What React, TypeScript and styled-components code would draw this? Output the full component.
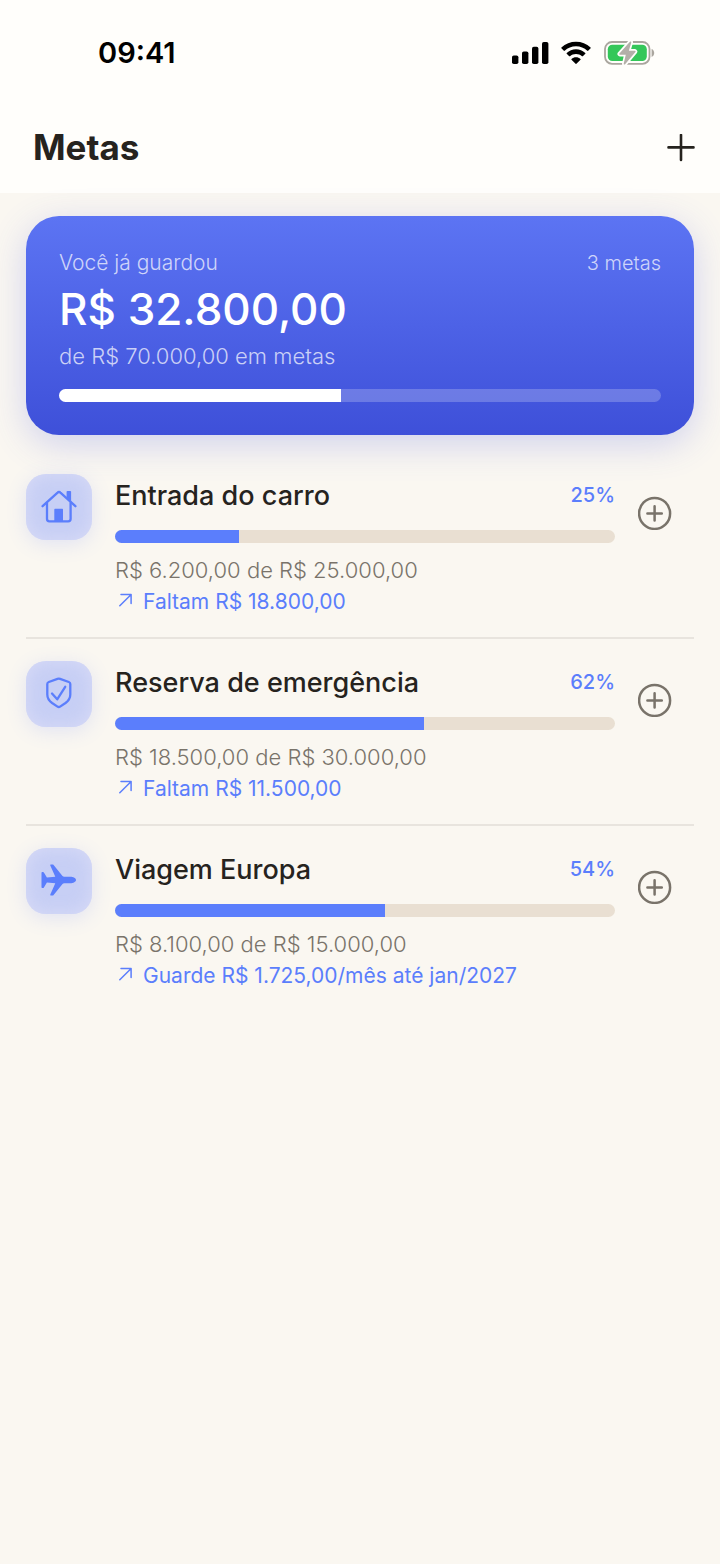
import React from "react";
import styled, { createGlobalStyle } from "styled-components";

const GlobalStyle = createGlobalStyle`
  * { box-sizing: border-box; }
  html { background: #faf7f1; }
  body {
    margin: 0;
    background: #faf7f1;
    color: #26231e;
    font-family: Inter, "Liberation Sans", sans-serif;
  }
`;

const Screen = styled.div`
  min-height: 100vh;
  overflow: hidden;
`;

const Header = styled.header`
  background: #fffefb;
  padding: 32px 25px 16px 33px;
`;

const StatusBar = styled.div`
  display: flex;
  align-items: center;
  justify-content: space-between;
  height: 42px;
  padding: 0 40px 0 65px;
`;

const Clock = styled.time`
  color: #000;
  font-size: 29px;
  font-weight: 600;
  line-height: 42px;
`;

const StatusIcons = styled.div`
  display: flex;
  align-items: center;
  gap: 11px;

  svg { display: block; }
`;

const TitleBar = styled.div`
  display: flex;
  align-items: center;
  justify-content: space-between;
  margin-top: 44px;
`;

const Title = styled.h1`
  margin: 0;
  font-size: 35px;
  font-weight: 700;
  line-height: 59px;
`;

const IconButton = styled.button`
  display: block;
  padding: 0;
  border: 0;
  background: none;
  color: inherit;
  cursor: pointer;

  svg { display: block; }
`;

const Main = styled.main`
  padding: 23px 26px;
`;

const Card = styled.section`
  padding: 33px;
  border-radius: 33px;
  background: linear-gradient(180deg, #5c74f3 0%, #3e50d9 100%);
  box-shadow: 0 9px 36px rgba(75, 92, 225, 0.24);
  color: #fff;
`;

const CardTop = styled.div`
  display: flex;
  justify-content: space-between;
`;

const Caption = styled.p<{ $size?: number }>`
  margin: 0;
  color: rgba(255, 255, 255, 0.72);
  font-size: ${(p) => p.$size ?? 21}px;
  font-weight: 300;
  line-height: 28px;
`;

const Amount = styled.p`
  margin: 0;
  font-size: 44px;
  font-weight: 500;
  line-height: 65px;
`;

const Bar = styled.div<{ $track: string }>`
  height: 13px;
  overflow: hidden;
  border-radius: 7px;
  background: ${(p) => p.$track};
`;

const CardBar = styled(Bar)`
  margin-top: 19px;
`;

const Fill = styled.div<{ $color: string }>`
  height: 100%;
  background: ${(p) => p.$color};
`;

const List = styled.ul`
  margin: 16px 0 0;
  padding: 0;
  list-style: none;
`;

const Item = styled.li`
  display: flex;
  align-items: flex-start;
  gap: 23px;
  padding: 23px 22px 20px 0;

  & + & { border-top: 2px solid #e8e4de; padding-top: 22px; }
`;

const Tile = styled.div`
  display: grid;
  flex: none;
  place-items: center;
  width: 66px;
  height: 66px;
  border-radius: 20px;
  background: #c7cff5;
  box-shadow: 0 4px 20px rgba(91, 126, 252, 0.16), inset 0 0 18px rgba(221, 223, 246, 0.8);
  color: #5b7efc;

  svg { display: block; }
`;

const Body = styled.div`
  flex: 1;
  min-width: 0;
`;

const ItemTop = styled.div`
  display: flex;
  justify-content: space-between;
`;

const Name = styled.h2`
  margin: 0;
  font-size: 27px;
  font-weight: 500;
  line-height: 44px;
`;

const Percent = styled.span`
  color: #5b7efc;
  font-size: 20px;
  font-weight: 500;
  line-height: 42px;
`;

const GoalBar = styled(Bar)`
  margin: 12px 0;
`;

const Saved = styled.p`
  margin: 0;
  color: #79736a;
  font-size: 22px;
  font-weight: 300;
  line-height: 31px;
`;

const Hint = styled.p`
  display: flex;
  align-items: center;
  gap: 9px;
  margin: 0;
  color: #5b7efc;
  font-size: 21px;
  font-weight: 400;
  line-height: 31px;
`;

const AddButton = styled(IconButton)`
  flex: none;
  margin-top: 22px;
  color: #79736a;
`;

const SignalIcon = () => (
  <svg width="37" height="24" viewBox="0 0 37 24" fill="#000" aria-hidden="true">
    <rect x="0" y="14.5" width="6.4" height="8.600" rx="1.8" />
    <rect x="10" y="10.5" width="6.4" height="12.600" rx="1.8" />
    <rect x="20" y="5.8" width="6.4" height="17.300" rx="1.8" />
    <rect x="30" y="1" width="6.4" height="22.100" rx="1.8" />
  </svg>
);

const WifiIcon = () => (
  <svg width="32" height="24" viewBox="0 0 32 24" fill="#000" aria-hidden="true">
    <path d="M16 5.3c4.3 0 8.300 1.700 11.300 4.500.25.2.6.2.8 0l2.500-2.500c.25-.25.25-.6 0-.8C26.600 2.700 21.500.7 16 .7S5.400 2.700 1.400 6.500c-.25.2-.25.55 0 .8l2.500 2.500c.2.2.55.2.8 0C7.700 7 11.700 5.300 16 5.300z" />
    <path d="M16 12.900c2.300 0 4.400.85 6 2.300.2.2.6.2.8 0l2.500-2.500c.25-.25.25-.6 0-.8C22.800 9.600 19.500 8.200 16 8.200s-6.800 1.400-9.300 3.700c-.25.2-.25.55 0 .8l2.500 2.500c.2.2.6.2.8 0 1.600-1.450 3.700-2.300 6-2.300z" />
    <path d="M20.500 18.700c.25-.25.25-.6 0-.8-1.200-1-2.800-1.600-4.500-1.600s-3.300.6-4.500 1.600c-.25.2-.25.55 0 .8l4.100 4.100c.22.22.58.22.8 0z" />
  </svg>
);

const BOLT = "M27.500 2.200 17 14h6.800L21.500 23.800 31.800 11.600h-7z";

const BatteryIcon = () => (
  <svg width="52" height="26" viewBox="0 0 52 26" aria-hidden="true">
    <rect x="2" y="2" width="44.500" height="21.800" rx="7" fill="none" stroke="#aaa69e" strokeWidth="1.800" />
    <path d="M48.600 9c1.600.6 2.600 2.200 2.600 4s-1 3.400-2.600 4z" fill="#aaa69e" />
    <rect x="4.800" y="4.800" width="39" height="16.200" rx="4.500" fill="#34c759" />
    <path d={BOLT} fill="#fffefb" stroke="#fffefb" strokeWidth="5" strokeLinejoin="round" />
    <path d={BOLT} fill="#b3afa8" stroke="#b3afa8" strokeWidth="1.600" strokeLinejoin="round" />
  </svg>
);

const PlusIcon = () => (
  <svg width="28" height="28" viewBox="0 0 28 28" fill="none" stroke="currentColor" strokeWidth="2.600" strokeLinecap="round" aria-hidden="true">
    <path d="M14 .900v25M1.500 13.400h25" />
  </svg>
);

const PlusCircleIcon = () => (
  <svg width="34" height="34" viewBox="0 0 34 34" fill="none" stroke="currentColor" strokeWidth="2.500" strokeLinecap="round" aria-hidden="true">
    <circle cx="16.600" cy="17.400" r="15.500" />
    <path d="M16.600 10.200v14.400M9.400 17.400h14.400" />
  </svg>
);

const ArrowIcon = () => (
  <svg width="19" height="19" viewBox="0 0 19 19" fill="none" stroke="currentColor" strokeWidth="1.500" strokeLinecap="round" strokeLinejoin="round" aria-hidden="true">
    <path d="M4.800 13.800 15.900 2.800M6 2.600h10.100V11.500" />
  </svg>
);

const HouseIcon = () => (
  <svg width="36" height="36" viewBox="0 0 36 36" fill="none" stroke="currentColor" strokeWidth="2.300" strokeLinecap="round" strokeLinejoin="round" aria-hidden="true">
    <path d="M1.600 17.200 16.600 3.600c.8-.8 2-.8 2.800 0L34.400 17.200" />
    <path d="M6 14V30c0 1.500.9 2.300 2.400 2.300h18.800c1.500 0 2.400-.8 2.400-2.300V14" />
    <path d="M13.300 32V20.700c0-.6.400-1 1-1h6.700c.6 0 1 .4 1 1V32z" fill="currentColor" stroke="none" />
    <path d="M26.400 1.900h2.900c.5 0 .8.300.8.800v10.800L25.600 9V2.700c0-.5.300-.8.800-.8z" fill="currentColor" stroke="none" />
  </svg>
);

const ShieldIcon = () => (
  <svg width="36" height="36" viewBox="0 0 36 36" fill="none" stroke="currentColor" strokeWidth="2.300" strokeLinecap="round" strokeLinejoin="round" aria-hidden="true">
    <path d="M16.500 2.900 7.800 6C6.700 6.400 6.300 6.900 6.300 8V18.500c0 4 1.600 6.200 4.800 8.500l5.400 3.600c.9.600 1.700.6 2.600 0l5.400-3.600c3.200-2.300 4.800-4.500 4.800-8.500V8c0-1.100-.4-1.600-1.500-2l-8.700-3.100c-.9-.3-1.700-.3-2.600 0z" />
    <path d="M11 17.500 16.200 23.300 24.200 10.800" />
  </svg>
);

const PlaneIcon = () => (
  <svg width="36" height="36" viewBox="0 1 36 36" fill="currentColor" aria-hidden="true">
    <path d="M35 18c0-1.900-2.700-3.200-5.700-3.200h-6.100c-.8 0-1.200-.2-1.700-.8L12.600 3.100c-.3-.4-.6-.5-1-.5H9.900c-.5 0-.8.5-.6 1l5 11.100-8.400.8L2.900 10.600c-.2-.4-.5-.6-1-.6h-.6c-.5 0-.8.300-.8.800v14.400c0 .5.300.8.800.8h.6c.5 0 .8-.2 1-.6l3-4.900 8.400.8-5 11.100c-.2.5.1 1 .6 1h1.700c.4 0 .7-.1 1-.5L21.500 22c.5-.6.9-.8 1.700-.8h6.100c3 0 5.700-1.300 5.700-3.200z" />
  </svg>
);

const goals = [
  { name: "Entrada do carro", percent: "25%", fill: 24.8, saved: "R$ 6.200,00 de R$ 25.000,00", hint: "Faltam R$ 18.800,00", Icon: HouseIcon },
  { name: "Reserva de emergência", percent: "62%", fill: 61.7, saved: "R$ 18.500,00 de R$ 30.000,00", hint: "Faltam R$ 11.500,00", Icon: ShieldIcon },
  { name: "Viagem Europa", percent: "54%", fill: 54, saved: "R$ 8.100,00 de R$ 15.000,00", hint: "Guarde R$ 1.725,00/mês até jan/2027", Icon: PlaneIcon },
];

export default function App() {
  return (
    <Screen>
      <GlobalStyle />
      <Header>
        <StatusBar>
          <Clock>09:41</Clock>
          <StatusIcons>
            <SignalIcon />
            <WifiIcon />
            <BatteryIcon />
          </StatusIcons>
        </StatusBar>
        <TitleBar>
          <Title>Metas</Title>
          <IconButton type="button" aria-label="Nova meta">
            <PlusIcon />
          </IconButton>
        </TitleBar>
      </Header>
      <Main>
        <Card>
          <CardTop>
            <Caption>Você já guardou</Caption>
            <Caption $size={20}>3 metas</Caption>
          </CardTop>
          <Amount>R$ 32.800,00</Amount>
          <Caption $size={22}>de R$ 70.000,00 em metas</Caption>
          <CardBar $track="rgba(255, 255, 255, 0.22)">
            <Fill $color="#fff" style={{ width: "46.86%" }} />
          </CardBar>
        </Card>
        <List>
          {goals.map(({ name, percent, fill, saved, hint, Icon }) => (
            <Item key={name}>
              <Tile>
                <Icon />
              </Tile>
              <Body>
                <ItemTop>
                  <Name>{name}</Name>
                  <Percent>{percent}</Percent>
                </ItemTop>
                <GoalBar $track="#e9dfd2">
                  <Fill $color="#5b7efc" style={{ width: `${fill}%` }} />
                </GoalBar>
                <Saved>{saved}</Saved>
                <Hint>
                  <ArrowIcon />
                  {hint}
                </Hint>
              </Body>
              <AddButton type="button" aria-label={`Guardar em ${name}`}>
                <PlusCircleIcon />
              </AddButton>
            </Item>
          ))}
        </List>
      </Main>
    </Screen>
  );
}
